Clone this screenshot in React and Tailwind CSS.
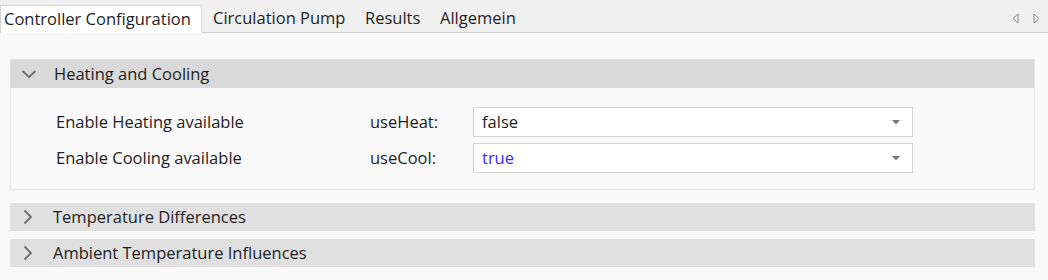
import React from "react";

function Chevron({ open }) {
  return open ? (
    <svg width="16" height="16" viewBox="0 0 16 16" className="shrink-0">
      <path d="M1.5 5 L8 11 L14.5 5" fill="none" stroke="#6e6e6e" strokeWidth="1.8" />
    </svg>
  ) : (
    <svg width="16" height="16" viewBox="0 0 16 16" className="shrink-0">
      <path d="M4.5 1.5 L11 8 L4.5 14.5" fill="none" stroke="#6e6e6e" strokeWidth="1.8" />
    </svg>
  );
}

function Header({ title, open, dark }) {
  return (
    <div
      className={
        "h-[28px] flex items-center " +
        (open ? "pl-[10px] " : "pl-[10px] ") +
        (dark ? "bg-[#d9d9d9]" : "bg-[#e0e0e0]")
      }
    >
      <Chevron open={open} />
      <span className="ml-[17px] text-[16.5px] leading-none text-[#1e1e1e]">{title}</span>
    </div>
  );
}

function Row({ label, key2, value, blue }) {
  return (
    <div className="flex items-center h-[30px]">
      <div className="w-[359px] pl-[45px] text-[16.5px] text-[#1e1e1e] whitespace-nowrap">{label}</div>
      <div className="w-[103px] text-[16.5px] text-[#1e1e1e] whitespace-nowrap">{key2}</div>
      <div className="w-[440px] h-[30px] bg-white border border-[#d4d4d4] flex items-center justify-between pl-[8px] pr-[12px]">
        <span className={"text-[16.5px] " + (blue ? "text-[#3a2bff]" : "text-[#1e1e1e]")}>{value}</span>
        <svg width="8" height="5" viewBox="0 0 8 5">
          <path d="M0 0 L8 0 L4 4.5 Z" fill="#7a7a7a" />
        </svg>
      </div>
    </div>
  );
}

export default function App() {
  return (
    <div
      className="w-[1048px] h-[280px] bg-[#f9f9f9] overflow-hidden"
      style={{ fontFamily: '"Open Sans", "Noto Sans", sans-serif' }}
    >
      <div className="h-[33px] bg-[#f0f0f0] border-b border-[#d3d3d3] flex items-end relative">
        <div className="w-[202px] h-[28px] bg-white border border-b-0 border-[#d3d3d3] -mb-px flex items-center pl-[3px] text-[16.5px] text-[#1e1e1e] whitespace-nowrap">
          Controller Configuration
        </div>
        <div className="w-[153px] h-[28px] flex items-center pl-[11px] text-[16.5px] text-[#1e1e1e] whitespace-nowrap">
          Circulation Pump
        </div>
        <div className="w-[75px] h-[28px] flex items-center pl-[10px] text-[16.5px] text-[#1e1e1e] whitespace-nowrap">
          Results
        </div>
        <div className="w-[97px] h-[28px] flex items-center pl-[10px] text-[16.5px] text-[#1e1e1e] whitespace-nowrap">
          Allgemein
        </div>
        <div className="ml-auto h-[28px] flex items-center gap-[14px] pr-[8px]">
          <svg width="7" height="11" viewBox="0 0 7 11">
            <path d="M6 1 L1 5.5 L6 10 Z" fill="none" stroke="#8a8a8a" strokeWidth="1" />
          </svg>
          <svg width="7" height="11" viewBox="0 0 7 11">
            <path d="M1 1 L6 5.5 L1 10 Z" fill="none" stroke="#8a8a8a" strokeWidth="1" />
          </svg>
        </div>
      </div>

      <div className="pl-[10px] pr-[13px] pt-[26px]">
        <div className="border border-[#e2e2e2]">
          <Header title="Heating and Cooling" open dark />
          <div className="pt-[19px] pb-[16px] flex flex-col gap-[6px]">
            <Row label="Enable Heating available" key2="useHeat:" value="false" />
            <Row label="Enable Cooling available" key2="useCool:" value="true" blue />
          </div>
        </div>
        <div className="mt-[13px]">
          <Header title="Temperature Differences" />
        </div>
        <div className="mt-[8px]">
          <Header title="Ambient Temperature Influences" />
        </div>
      </div>
    </div>
  );
}
